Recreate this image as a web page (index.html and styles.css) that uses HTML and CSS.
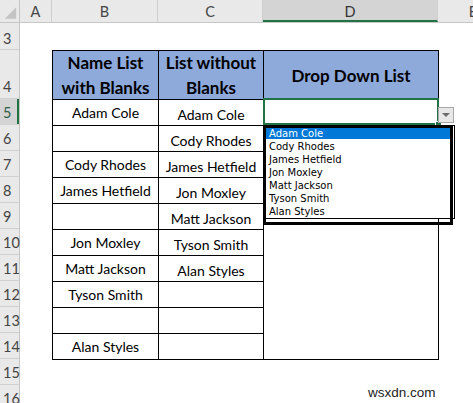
FILE: index.html
```html
<!DOCTYPE html>
<html>
<head>
<meta charset="utf-8">
<link rel="stylesheet" href="styles.css">
</head>
<body>
<div class="sheet">
  <div class="colheads">
    <div class="corner">
      <svg width="20" height="23" viewBox="0 0 20 23"><polygon points="17,7 17,19 5,19" fill="#c4c4c4"/></svg>
    </div>
    <div class="ch wa">A</div>
    <div class="ch wb">B</div>
    <div class="ch wc">C</div>
    <div class="ch wd sel">D</div>
    <div class="ch we">E</div>
  </div>
  <div class="body">
    <div class="rowheads">
      <div class="rh h27">3</div>
      <div class="rh h49">4</div>
      <div class="rh sel">5</div>
      <div class="rh">6</div>
      <div class="rh">7</div>
      <div class="rh">8</div>
      <div class="rh">9</div>
      <div class="rh">10</div>
      <div class="rh">11</div>
      <div class="rh">12</div>
      <div class="rh">13</div>
      <div class="rh">14</div>
      <div class="rh">15</div>
      <div class="rh">16</div>
    </div>
    <div class="cells">
      <div class="table">
        <div class="th">Name List<br>with Blanks</div>
        <div class="th">List without<br>Blanks</div>
        <div class="th">Drop Down List</div>
        <div class="dcell"></div>

        <div class="td b">Adam Cole</div><div class="td c">Adam Cole</div>
        <div class="td b"></div><div class="td c">Cody Rhodes</div>
        <div class="td b">Cody Rhodes</div><div class="td c">James Hetfield</div>
        <div class="td b">James Hetfield</div><div class="td c">Jon Moxley</div>
        <div class="td b"></div><div class="td c">Matt Jackson</div>
        <div class="td b">Jon Moxley</div><div class="td c">Tyson Smith</div>
        <div class="td b">Matt Jackson</div><div class="td c">Alan Styles</div>
        <div class="td b">Tyson Smith</div><div class="td c"></div>
        <div class="td b"></div><div class="td c"></div>
        <div class="td b">Alan Styles</div><div class="td c"></div>

        <div class="selection"></div>
        <div class="handle"></div>
        <div class="ddbtn"><svg width="8" height="5" viewBox="0 0 8 5"><polygon points="0,0 8,0 4,4" fill="#6b6b6b"/></svg></div>
        <div class="listbox">
          <div class="item active">Adam Cole</div>
          <div class="item">Cody Rhodes</div>
          <div class="item">James Hetfield</div>
          <div class="item">Jon Moxley</div>
          <div class="item">Matt Jackson</div>
          <div class="item">Tyson Smith</div>
          <div class="item">Alan Styles</div>
        </div>
        <div class="frame"></div>
      </div>
      <div class="watermark">wsxdn.com</div>
    </div>
  </div>
</div>
</body>
</html>
```

FILE: styles.css
```css
html, body {
  margin: 0;
  padding: 0;
  background: #ffffff;
  overflow: hidden;
}
.sheet {
  width: 473px;
  height: 403px;
  position: relative;
  overflow: hidden;
  font-family: Lato, "Liberation Sans", sans-serif;
}
.colheads {
  display: flex;
  height: 23px;
  background: #e9e9e9;
  border-bottom: 1px solid #c6c6c6;
  box-sizing: border-box;
}
.corner {
  width: 20px;
  flex: none;
  border-right: 1px solid #c6c6c6;
  box-sizing: border-box;
  display: flex;
}
.ch {
  flex: none;
  box-sizing: border-box;
  border-right: 1px solid #d0d0d0;
  display: flex;
  align-items: center;
  justify-content: center;
  font-size: 14.5px;
  color: #444;
  padding-top: 1px;
}
.wa { width: 32px; }
.wb { width: 106px; }
.wc { width: 105px; }
.wd { width: 175px; }
.we { width: 70px; border-right: none; }
.ch.sel {
  background: #d4d4d4;
  border-bottom: 2px solid #217346;
  color: #333;
  padding-top: 3px;
}
.body {
  display: flex;
}
.rowheads {
  width: 20px;
  flex: none;
  background: #e9e9e9;
  border-right: 1px solid #c6c6c6;
  box-sizing: border-box;
  display: flex;
  flex-direction: column;
}
.rh {
  height: 26px;
  flex: none;
  box-sizing: border-box;
  border-bottom: 1px solid #d0d0d0;
  display: flex;
  align-items: flex-end;
  padding: 0 0 3px 3px;
  font-size: 14.5px;
  color: #444;
}
.rh.h27 { height: 27px; padding-bottom: 2px; }
.rh.h49 { height: 49px; }
.rh.sel {
  background: #d4d4d4;
  box-shadow: inset -2px 0 0 #217346;
  color: #2f5f45;
}
.cells {
  position: relative;
  flex: 1;
  padding: 27px 0 0 32px;
}
.table {
  position: relative;
  display: grid;
  grid-template-columns: 105px 104px 174px;
  grid-template-rows: 48px repeat(10, 25px);
  gap: 1px;
  padding: 1px;
  background: #000;
  width: max-content;
}
.th {
  background: #8eaadb;
  display: flex;
  align-items: center;
  justify-content: center;
  text-align: center;
  font-weight: bold;
  font-size: 17px;
  line-height: 25px;
  color: #000;
}
.td {
  background: #fff;
  display: flex;
  align-items: center;
  justify-content: center;
  font-size: 14px;
  color: #000;
}
.td.b { grid-column: 1; padding-bottom: 1px; }
.td.c { grid-column: 2; padding-top: 3px; }
.dcell {
  grid-column: 3;
  grid-row: 2 / span 10;
  background: #fff;
}
.selection {
  position: absolute;
  left: 211px;
  top: 48px;
  width: 176px;
  height: 27px;
  box-sizing: border-box;
  border: 2px solid #217346;
}
.handle {
  position: absolute;
  left: 383px;
  top: 71px;
  width: 5px;
  height: 5px;
  background: #217346;
  border: 1px solid #fff;
}
.ddbtn {
  position: absolute;
  left: 386px;
  top: 57px;
  width: 16px;
  height: 16px;
  box-sizing: border-box;
  background: #e8e8e8;
  border: 1px solid #a8a8a8;
  display: flex;
  align-items: center;
  justify-content: center;
  padding-top: 1px;
}
.listbox {
  position: absolute;
  left: 211px;
  top: 75px;
  width: 192px;
  height: 94px;
  box-sizing: border-box;
  background: #fff;
  border: 1px solid #000;
  padding: 2px 4px 0 2px;
  font-family: "DejaVu Sans", sans-serif;
  font-size: 10px;
}
.item {
  height: 13px;
  line-height: 12px;
  padding-left: 3px;
  color: #000;
  white-space: nowrap;
}
.item.active {
  background: #0078d7;
  color: #fff;
  height: 11px;
  line-height: 11px;
  margin-bottom: 2px;
}
.frame {
  position: absolute;
  left: 211px;
  top: 75px;
  width: 190px;
  height: 100px;
  box-sizing: border-box;
  border: 3px solid #000;
}
.watermark {
  position: absolute;
  left: 348px;
  top: 362px;
  font-family: "Liberation Sans", sans-serif;
  font-size: 13.5px;
  color: #222;
}
```
